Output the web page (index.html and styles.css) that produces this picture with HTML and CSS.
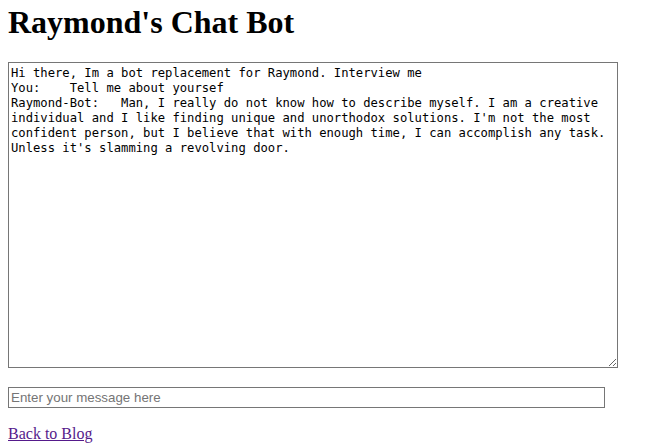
FILE: index.html
```html
<!DOCTYPE html>
<html>
<head>
<meta charset="utf-8">
<title>Raymond's Chat Bot</title>
<link rel="stylesheet" href="styles.css">
</head>
<body class="page">
<h1 class="title">Raymond's Chat Bot</h1>
<textarea class="log" readonly>Hi there, Im a bot replacement for Raymond. Interview me
You:    Tell me about yoursef
Raymond-Bot:   Man, I really do not know how to describe myself. I am a creative individual and I like finding unique and unorthodox solutions. I'm not the most confident person, but I believe that with enough time, I can accomplish any task. Unless it's slamming a revolving door.</textarea>
<input class="msg" type="text" placeholder="Enter your message here">
<a class="back" href="#">Back to Blog</a>
</body>
</html>
```
FILE: styles.css
```css
html, body { background: #fff; }
.page {
  margin: 0;
  padding: 0 8px;
  font-family: "Liberation Serif", "Times New Roman", serif;
  font-size: 16px;
}
.title {
  margin: 4px 0 21px;
  font-size: 32px;
  font-weight: bold;
  color: #000;
}
.log {
  display: block;
  box-sizing: border-box;
  width: 610px;
  height: 306px;
  margin: 0 0 19px;
  padding: 3px 2px 2px;
  border: 1px solid #767676;
  font-family: "DejaVu Sans Mono", "Liberation Mono", monospace;
  font-size: 12.2px;
  line-height: 15px;
  color: #000;
  resize: both;
}
.msg {
  display: block;
  box-sizing: border-box;
  width: 597px;
  height: 21px;
  margin: 0;
  padding: 1px 2px;
  border: 1px solid #767676;
  font-family: "Liberation Sans", Arial, sans-serif;
  font-size: 13.33px;
}
.msg::placeholder { color: #757575; }
.back {
  display: inline-block;
  margin-top: 17px;
  color: #551a8b;
  text-decoration: underline;
}
```
